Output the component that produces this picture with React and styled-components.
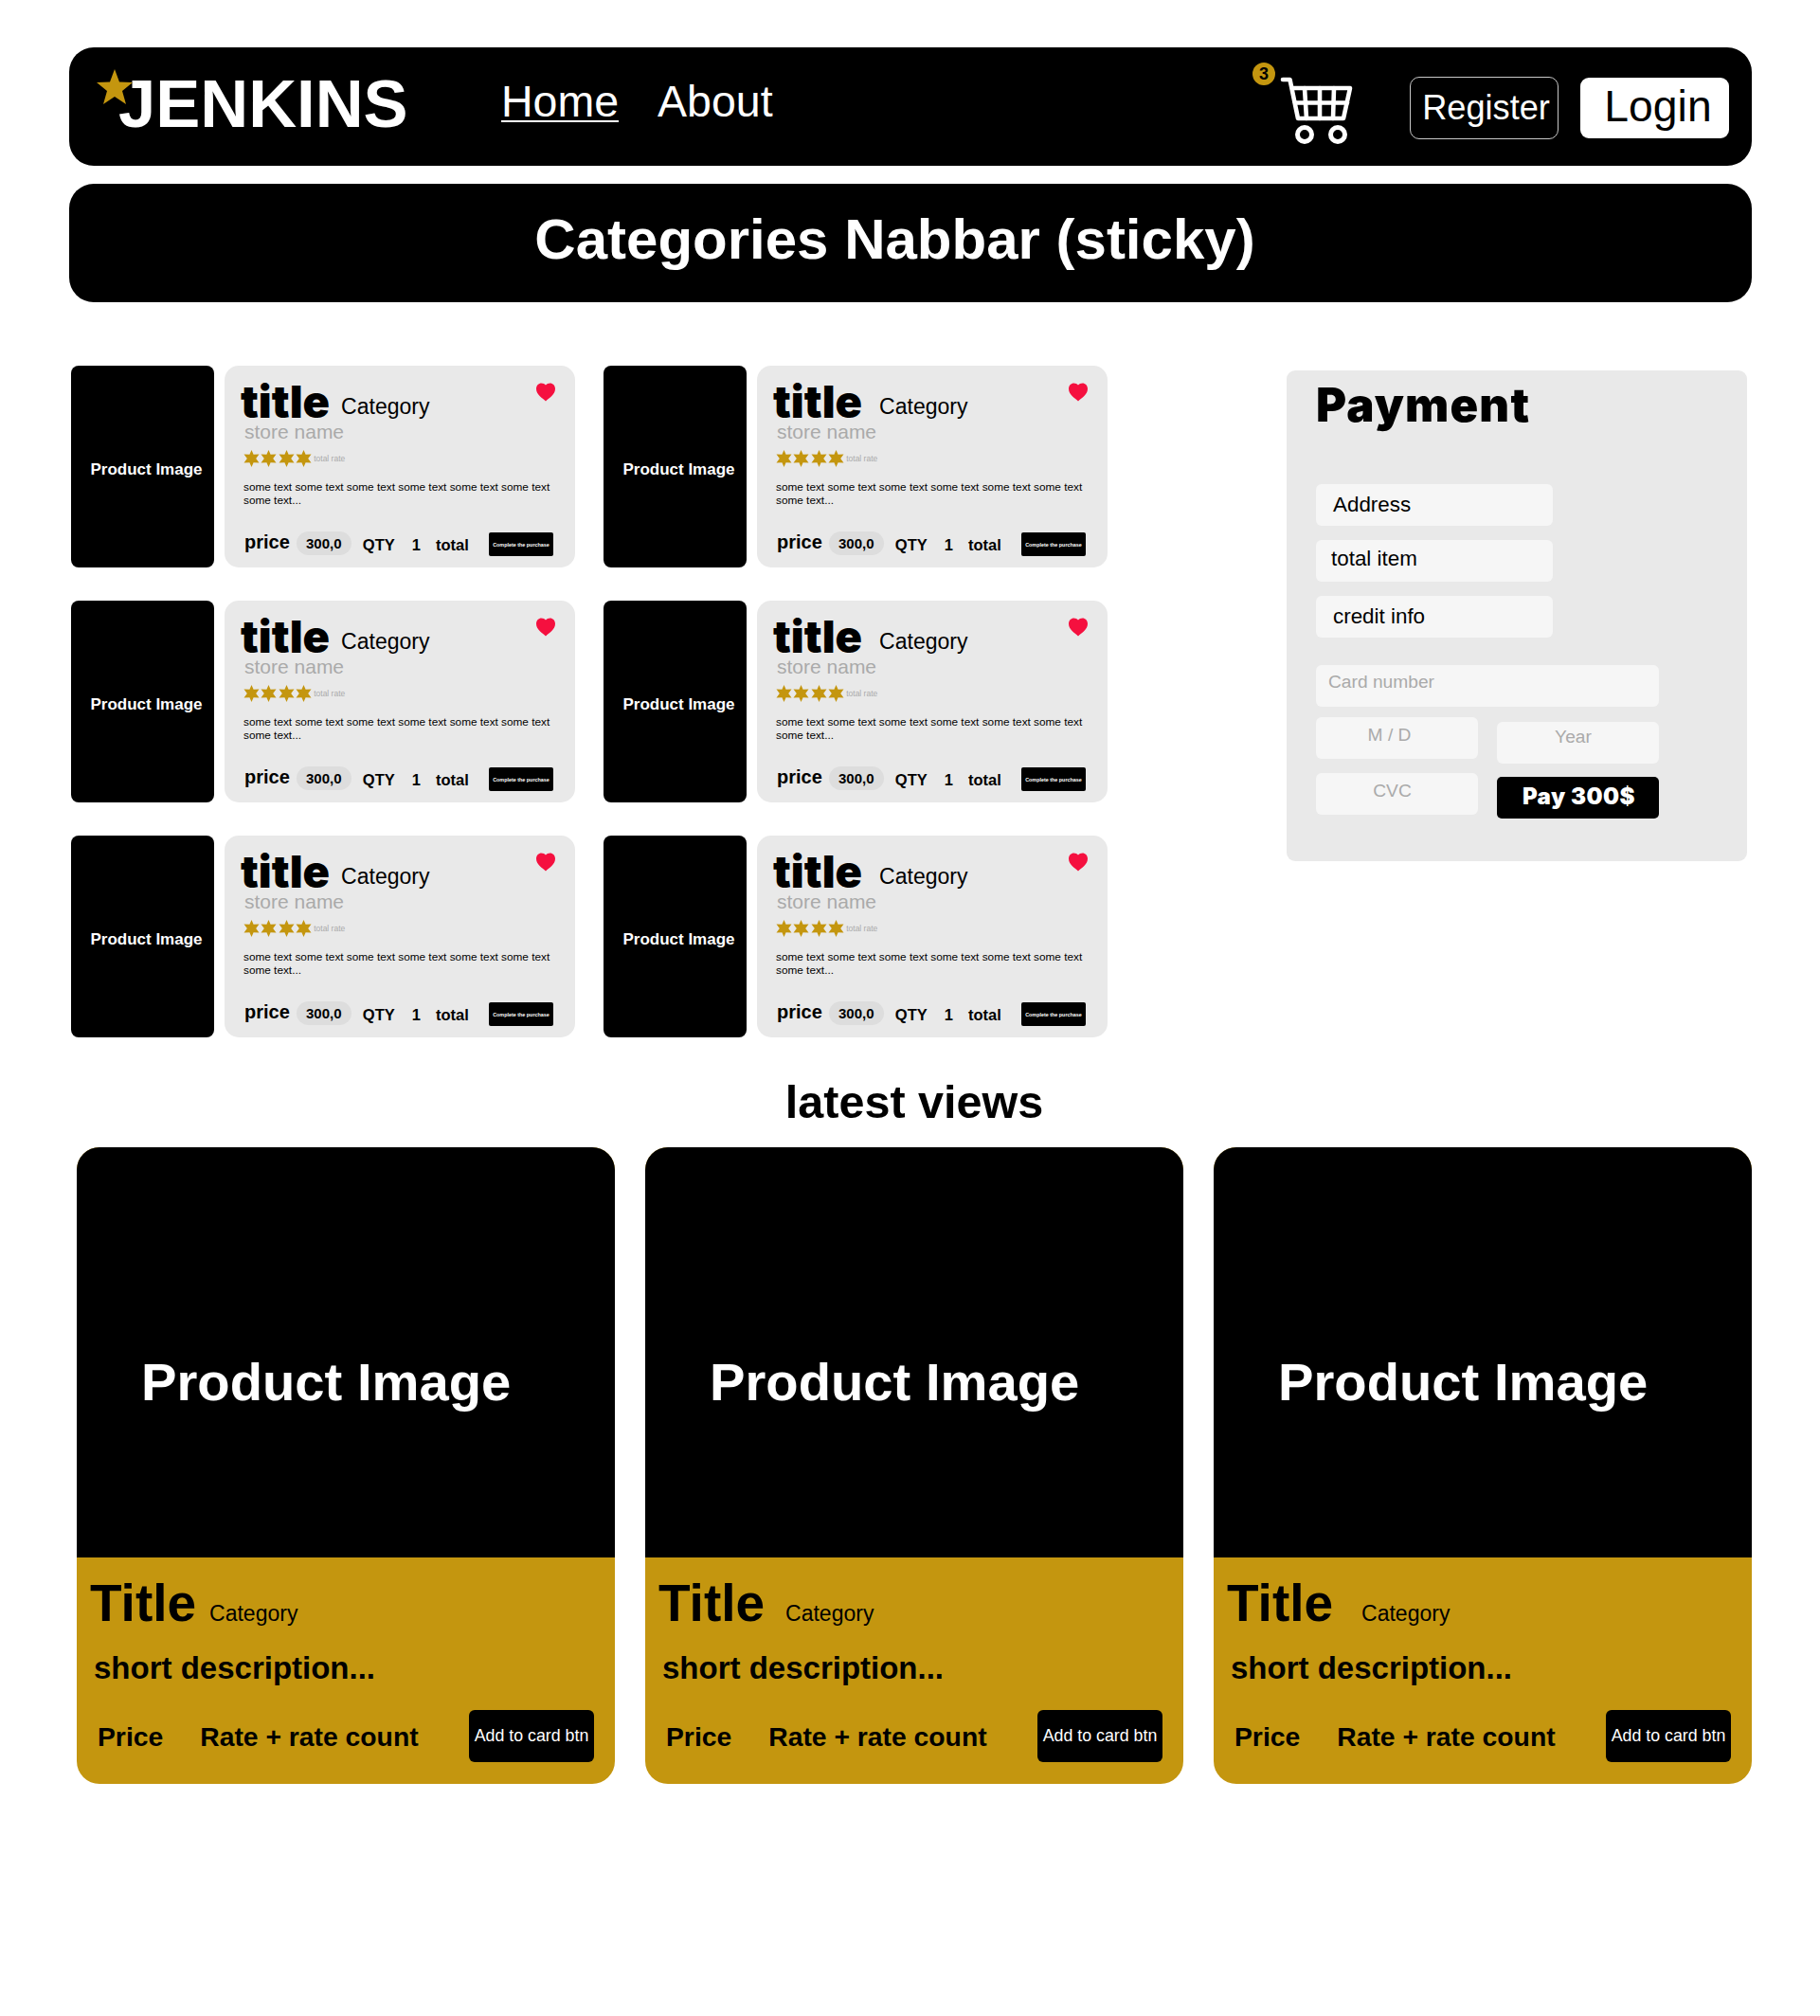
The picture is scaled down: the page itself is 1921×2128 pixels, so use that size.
import React from 'react'
import styled, { createGlobalStyle } from 'styled-components'

const GOLD = '#c4960f'
const BLACK_FONT = '"Inter", "Liberation Sans", sans-serif'

const GlobalStyle = createGlobalStyle`
  * {
    box-sizing: border-box;
  }

  body {
    margin: 0;
    background: #fff;
    color: #000;
    font-family: "Liberation Sans", Arial, sans-serif;
  }
`

const Page = styled.div`
  width: 1921px;
  height: 2128px;
  padding: 50px 72px 0 73px;
`

const Navbar = styled.nav`
  position: relative;
  display: flex;
  align-items: center;
  height: 125px;
  border-radius: 26px;
  background: #000;
  color: #fff;
`

const Logo = styled.div`
  position: relative;
  margin: -4px 0 0 52px;
  width: 404px;
  font-size: 70.5px;
  font-weight: 700;
  line-height: 1;
`

const LogoStar = styled.svg`
  position: absolute;
  left: -23px;
  top: -2px;
  width: 38px;
  height: 37px;
`

const NavLinks = styled.div`
  display: flex;
  gap: 41px;
  margin-top: -11px;
  font-size: 46.5px;
  line-height: 1;
`

const NavLink = styled.a`
  color: #fff;
  text-decoration: ${props => (props.$active ? 'underline' : 'none')};
  text-decoration-thickness: 2px;
  text-underline-offset: 4px;
`

const Cart = styled.div`
  position: relative;
  width: 80px;
  height: 75px;
  margin-left: auto;
  margin-top: 10px;
`

const CartBadge = styled.span`
  position: absolute;
  left: -28px;
  top: -14px;
  display: flex;
  align-items: center;
  justify-content: center;
  width: 24px;
  height: 24px;
  border-radius: 50%;
  background: ${GOLD};
  color: #000;
  font-size: 18px;
  font-weight: 700;
`

const Register = styled.button`
  width: 157px;
  height: 66px;
  margin: 2px 0 0 58px;
  padding: 0 0 0 4px;
  border: 1px solid #c8c8c8;
  border-radius: 10px;
  background: #000;
  color: #fff;
  font: 400 36.2px "Liberation Sans", sans-serif;
`

const Login = styled.button`
  width: 157px;
  height: 64px;
  margin: 2px 24px 0 23px;
  padding: 0 0 4px 7px;
  border: 0;
  border-radius: 9px;
  background: #fff;
  color: #000;
  font: 400 46.3px "Liberation Sans", sans-serif;
`

const CategoriesBar = styled.div`
  display: flex;
  align-items: center;
  justify-content: center;
  height: 125px;
  margin-top: 19px;
  padding: 0 33px 8px 0;
  border-radius: 26px;
  background: #000;
  color: #fff;
  font-size: 60px;
  font-weight: 700;
`

const Main = styled.div`
  display: flex;
  align-items: flex-start;
  justify-content: space-between;
  margin: 67px 5px 0 2px;
`

const ProductGrid = styled.div`
  display: grid;
  grid-template-columns: 532px 532px;
  column-gap: 30px;
  row-gap: 35px;
`

const ProductRow = styled.article`
  display: flex;
  gap: 11px;
  height: 213px;
`

const ThumbBox = styled.div`
  display: flex;
  align-items: center;
  justify-content: center;
  width: 151px;
  flex: none;
  padding: 7px 0 0 8px;
  border-radius: 8px;
  background: #000;
  color: #fff;
  font-size: 17px;
  font-weight: 700;
`

const ProductPanel = styled.div`
  position: relative;
  flex: 1;
  display: flex;
  flex-direction: column;
  padding: 15px 23px 0 20px;
  border-radius: 15px;
  background: #e9e9e9;
`

const TitleLine = styled.div`
  display: flex;
  align-items: flex-start;
  margin-left: -3px;
  height: 46px;
`

const ProductTitle = styled.span`
  font-family: ${BLACK_FONT};
  font-size: 47px;
  font-weight: 900;
  line-height: 46px;
`

const ProductCategory = styled.span`
  margin-left: ${props => props.$gap}px;
  padding-top: 15px;
  font-size: 23px;
  line-height: 26px;
`

const StoreName = styled.div`
  margin: -3px 0 0 1px;
  color: #aaa;
  font-size: 21px;
  line-height: 24px;
`

const RateLine = styled.div`
  display: flex;
  align-items: center;
  gap: 1.3px;
  margin-top: 7px;
  height: 18px;
`

const SixStar = styled.svg`
  width: 17px;
  height: 18px;
`

const RateLabel = styled.span`
  margin-left: 1px;
  color: #aaa;
  font-size: 8.5px;
`

const Blurb = styled.p`
  margin: 14px 0 0;
  font-size: 11.8px;
  line-height: 14px;
`

const ProductFooter = styled.div`
  position: absolute;
  left: 20px;
  right: 23px;
  bottom: 12px;
  display: flex;
  align-items: center;
  font-weight: 700;
`

const PriceLabel = styled.span`
  margin: -2px 0 0 1px;
  font-size: 20px;
`

const PricePill = styled.span`
  display: flex;
  align-items: center;
  justify-content: center;
  width: 58px;
  height: 25px;
  margin-left: 7px;
  border-radius: 13px;
  background: #ddd;
  font-size: 15px;
`

const FooterLabel = styled.span`
  margin-left: ${props => props.$gap}px;
  margin-top: 3px;
  font-size: 16.5px;
`

const CompleteBtn = styled.button`
  width: 68px;
  height: 25px;
  margin: 2px 0 0 auto;
  padding: 0;
  border: 0;
  border-radius: 2px;
  background: #000;
  color: #fff;
  font: 700 5.4px "Liberation Sans", sans-serif;
`

const Heart = styled.svg`
  position: absolute;
  top: 18px;
  right: 21px;
  width: 20px;
  height: 20px;
`

const PaymentPanel = styled.aside`
  width: 486px;
  height: 518px;
  margin-top: 5px;
  padding: 8px 31px 0;
  border-radius: 9px;
  background: #e9e9e9;
`

const PaymentTitle = styled.h2`
  margin: 0 0 53.5px;
  font-family: ${BLACK_FONT};
  font-size: 49px;
  font-weight: 900;
  letter-spacing: 1.2px;
  line-height: 58px;
`

const InfoBox = styled.div`
  display: flex;
  align-items: center;
  width: 250px;
  height: 44px;
  margin-bottom: 15px;
  padding: 0 0 ${props => props.$lift || 0}px ${props => props.$inset}px;
  border-radius: 6px;
  background: #f6f6f6;
  font-size: 22.4px;
`

const CardForm = styled.div`
  display: grid;
  grid-template-columns: 171px 171px;
  column-gap: 20px;
  width: 362px;
  margin-top: 29px;
`

const CardInput = styled.div`
  grid-column: ${props => (props.$wide ? '1 / 3' : 'auto')};
  height: 44px;
  margin-top: ${props => props.$offset || 0}px;
  padding: ${props => props.$top}px ${props => props.$right || 0}px 0 ${props => (props.$wide ? 13 : 0)}px;
  border-radius: 6px;
  background: #f6f6f6;
  color: #aaa;
  font-size: 19.2px;
  text-align: ${props => (props.$wide ? 'left' : 'center')};
`

const PayBtn = styled.button`
  height: 44px;
  margin-top: 14px;
  padding: 0 0 2px 2px;
  border: 0;
  border-radius: 5px;
  background: #000;
  color: #fff;
  font-family: ${BLACK_FONT};
  font-size: 24px;
  font-weight: 900;
  letter-spacing: 0.5px;
`

const LatestHeading = styled.h2`
  margin: 40px 0 0 8px;
  font-size: 48.5px;
  font-weight: 700;
  line-height: 56px;
  text-align: center;
`

const LatestGrid = styled.section`
  display: grid;
  grid-template-columns: repeat(3, 568px);
  column-gap: 32px;
  margin: 20px 0 0 8px;
`

const LatestCard = styled.article`
  height: 672px;
  border-radius: 24px;
  overflow: hidden;
  background: ${GOLD};
`

const LatestImage = styled.div`
  display: flex;
  align-items: center;
  height: 433px;
  padding: 62px 0 0 68px;
  background: #000;
  color: #fff;
  font-size: 56.2px;
  font-weight: 700;
`

const LatestBody = styled.div`
  position: relative;
  padding: 17px 22px 0 14px;
`

const LatestTitleLine = styled.div`
  display: flex;
  align-items: baseline;
`

const LatestTitle = styled.span`
  font-size: 55px;
  font-weight: 700;
  line-height: 62px;
`

const LatestCategory = styled.span`
  margin-left: ${props => props.$gap}px;
  font-size: 23px;
`

const ShortDesc = styled.div`
  margin: 18px 0 0 4px;
  font-size: 33px;
  font-weight: 700;
  line-height: 40px;
`

const LatestFooter = styled.div`
  display: flex;
  align-items: center;
  margin: 24px 0 0 8px;
  font-size: 28.3px;
  font-weight: 700;
`

const LatestPrice = styled.span`
  margin-top: 1px;
`

const LatestRate = styled.span`
  margin: 1px 0 0 39px;
`

const AddBtn = styled.button`
  width: 132px;
  height: 55px;
  margin-left: auto;
  padding: 0;
  border: 0;
  border-radius: 6px;
  background: #000;
  color: #fff;
  font: 400 17.8px "Liberation Sans", sans-serif;
`

const products = [
  { id: 1, gap: 12 },
  { id: 2, gap: 18 },
  { id: 3, gap: 12 },
  { id: 4, gap: 18 },
  { id: 5, gap: 12 },
  { id: 6, gap: 18 },
]

const latest = [
  { id: 1, gap: 14 },
  { id: 2, gap: 22 },
  { id: 3, gap: 30 },
]

const CartIcon = () => (
  <svg width="80" height="75" viewBox="40 25 80 75" fill="none" stroke="#fff" strokeWidth="4.6" strokeLinejoin="round" strokeLinecap="round">
    <path d="M44 29H51.5L60 70H108L115 38H54" />
    <path d="M57 53.5H112" />
    <path d="M67 38L69 70M83 38V70M98 38L97 70" />
    <circle cx="67" cy="87" r="7.5" strokeWidth="5" />
    <circle cx="102" cy="87" r="7.5" strokeWidth="5" />
  </svg>
)

const RateStar = () => (
  <SixStar viewBox="0 0 17 18">
    <path fill={GOLD} d="M8.5 0L10.6 4.8L16.5 4.5L13.2 9L16.5 13.5L10.6 13.2L8.5 18L6.4 13.2L.5 13.5L3.8 9L.5 4.5L6.4 4.8Z" />
  </SixStar>
)

const Product = ({ gap }) => (
  <ProductRow>
    <ThumbBox>Product Image</ThumbBox>
    <ProductPanel>
      <TitleLine>
        <ProductTitle>title</ProductTitle>
        <ProductCategory $gap={gap}>Category</ProductCategory>
      </TitleLine>
      <StoreName>store name</StoreName>
      <RateLine>
        <RateStar />
        <RateStar />
        <RateStar />
        <RateStar />
        <RateLabel>total rate</RateLabel>
      </RateLine>
      <Blurb>some text some text some text some text some text some text some text...</Blurb>
      <Heart viewBox="0 0 20 20">
        <path fill="#f5103f" d="M10 19.5C7 16.5 0 12.5 0 6.5C0 2.8 2.6 .5 5.4 .5C7.4 .5 9 1.4 10 2.6C11 1.4 12.6 .5 14.6 .5C17.4 .5 20 2.8 20 6.5C20 12.5 13 16.5 10 19.5Z" />
      </Heart>
      <ProductFooter>
        <PriceLabel>price</PriceLabel>
        <PricePill>300,0</PricePill>
        <FooterLabel $gap={12}>QTY</FooterLabel>
        <FooterLabel $gap={18}>1</FooterLabel>
        <FooterLabel $gap={16}>total</FooterLabel>
        <CompleteBtn>Complete the purchase</CompleteBtn>
      </ProductFooter>
    </ProductPanel>
  </ProductRow>
)

const App = () => (
  <>
    <GlobalStyle />
    <Page>
      <Navbar>
        <Logo>
          <LogoStar viewBox="0 0 38 37">
            <path fill={GOLD} d="M19 0L24 13.5L38 14L27 23L31 37L19 29L7 37L11 23L0 14L14 13.5Z" />
          </LogoStar>
          JENKINS
        </Logo>
        <NavLinks>
          <NavLink $active>Home</NavLink>
          <NavLink>About</NavLink>
        </NavLinks>
        <Cart>
          <CartBadge>3</CartBadge>
          <CartIcon />
        </Cart>
        <Register>Register</Register>
        <Login>Login</Login>
      </Navbar>
      <CategoriesBar>Categories Nabbar (sticky)</CategoriesBar>

      <Main>
        <ProductGrid>
          {products.map(p => (
            <Product key={p.id} gap={p.gap} />
          ))}
        </ProductGrid>
        <PaymentPanel>
          <PaymentTitle>Payment</PaymentTitle>
          <InfoBox $inset={18}>Address</InfoBox>
          <InfoBox $inset={16} $lift={3}>total item</InfoBox>
          <InfoBox $inset={18}>credit info</InfoBox>
          <CardForm>
            <CardInput $wide $top={7}>Card number</CardInput>
            <CardInput $offset={11} $top={8} $right={16}>M / D</CardInput>
            <CardInput $offset={16} $top={5} $right={10}>Year</CardInput>
            <CardInput $offset={10} $top={8} $right={10}>CVC</CardInput>
            <PayBtn>Pay 300$</PayBtn>
          </CardForm>
        </PaymentPanel>
      </Main>

      <LatestHeading>latest views</LatestHeading>
      <LatestGrid>
        {latest.map(card => (
          <LatestCard key={card.id}>
            <LatestImage>Product Image</LatestImage>
            <LatestBody>
              <LatestTitleLine>
                <LatestTitle>Title</LatestTitle>
                <LatestCategory $gap={card.gap}>Category</LatestCategory>
              </LatestTitleLine>
              <ShortDesc>short description...</ShortDesc>
              <LatestFooter>
                <LatestPrice>Price</LatestPrice>
                <LatestRate>Rate + rate count</LatestRate>
                <AddBtn>Add to card btn</AddBtn>
              </LatestFooter>
            </LatestBody>
          </LatestCard>
        ))}
      </LatestGrid>
    </Page>
  </>
)

export default App
